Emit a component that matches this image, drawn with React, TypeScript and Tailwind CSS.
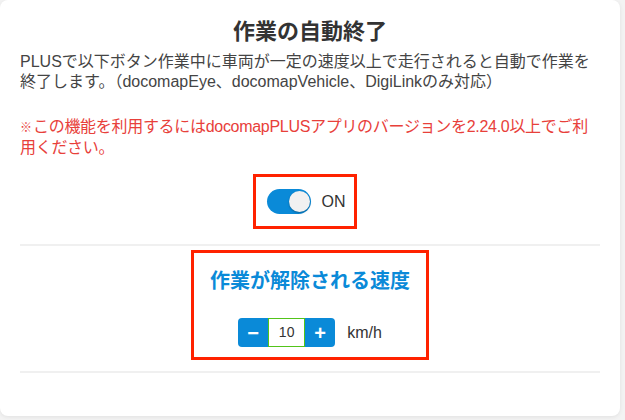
const font = "font-['Liberation_Sans','Noto_Sans_CJK_JP',sans-serif]";

const Toggle: React.FC<{ on: boolean }> = ({ on }) => {
  return (
    <div className="flex items-center">
      <div className="relative w-[44px] h-[25px] rounded-full bg-[#0a8ad8]">
        <div
          className={
            on
              ? "absolute top-[2px] right-[1px] w-[21px] h-[21px] rounded-full bg-[#f1f1f1] shadow-[0_1px_2px_rgba(0,0,0,0.3)]"
              : "absolute top-[2px] left-[1px] w-[21px] h-[21px] rounded-full bg-[#f1f1f1] shadow-[0_1px_2px_rgba(0,0,0,0.3)]"
          }
        />
      </div>
      <span className="ml-[11px] text-[16px] text-[#333]">{on ? "ON" : "OFF"}</span>
    </div>
  );
};

const Stepper: React.FC<{ value: number }> = ({ value }) => {
  return (
    <div className="flex items-center">
      <div className="flex h-[29px]">
        <button className="w-[30px] h-full bg-[#0a8ad8] rounded-l-[4px] text-white text-[20px] font-bold leading-none flex items-center justify-center">
          −
        </button>
        <div className="w-[37px] h-full border border-[#52c41a] bg-white flex items-center justify-center text-[14px] text-[#333]">
          {value}
        </div>
        <button className="w-[30px] h-full bg-[#0a8ad8] rounded-r-[4px] text-white text-[20px] font-bold leading-none flex items-center justify-center">
          +
        </button>
      </div>
      <span className="ml-[12px] text-[16px] text-[#333]">km/h</span>
    </div>
  );
};

export default function App() {
  return (
    <div className={`min-h-screen bg-[#f3f3f3] ${font}`}>
      <div className="w-[620px] h-[416px] bg-white rounded-[8px] shadow-[0_1px_4px_rgba(0,0,0,0.08)] px-5 pt-3">
        <h2 className="text-center text-[22px] leading-[40px] font-bold text-[#333]">作業の自動終了</h2>
        <p className="text-[16px] leading-[20px] text-[#444]">
          PLUSで以下ボタン作業中に車両が一定の速度以上で走行されると自動で作業を終了します。（docomapEye、docomapVehicle、DigiLinkのみ対応）
        </p>
        <p className="mt-[25px] text-[16px] leading-[20px] tracking-[-0.3px] text-[#e8403a]">
          <span className="inline-block w-[13px] text-[12px] leading-[20px] tracking-normal">※</span>この機能を利用するにはdocomapPLUSアプリのバージョンを2.24.0以上でご利用ください。
        </p>
        <div className="flex justify-center mt-[16px] pr-[11px]">
          <div className="h-[55px] border-[3px] border-[#ff2200] flex items-center pl-[11px] pr-[8px]">
            <Toggle on={true} />
          </div>
        </div>
        <div className="mt-[15px] h-[2px] bg-[#f0f0f0]" />
        <div className="flex justify-center mt-[4px]">
          <div className="w-[238px] h-[110px] border-[3px] border-[#ff2200] flex flex-col items-center pt-[14px]">
            <h3 className="text-[20px] leading-[28px] font-bold text-[#0a8ad8]">作業が解除される速度</h3>
            <div className="mt-[23px]">
              <Stepper value={10} />
            </div>
          </div>
        </div>
        <div className="mt-[11px] h-[2px] bg-[#f0f0f0]" />
      </div>
    </div>
  );
}
